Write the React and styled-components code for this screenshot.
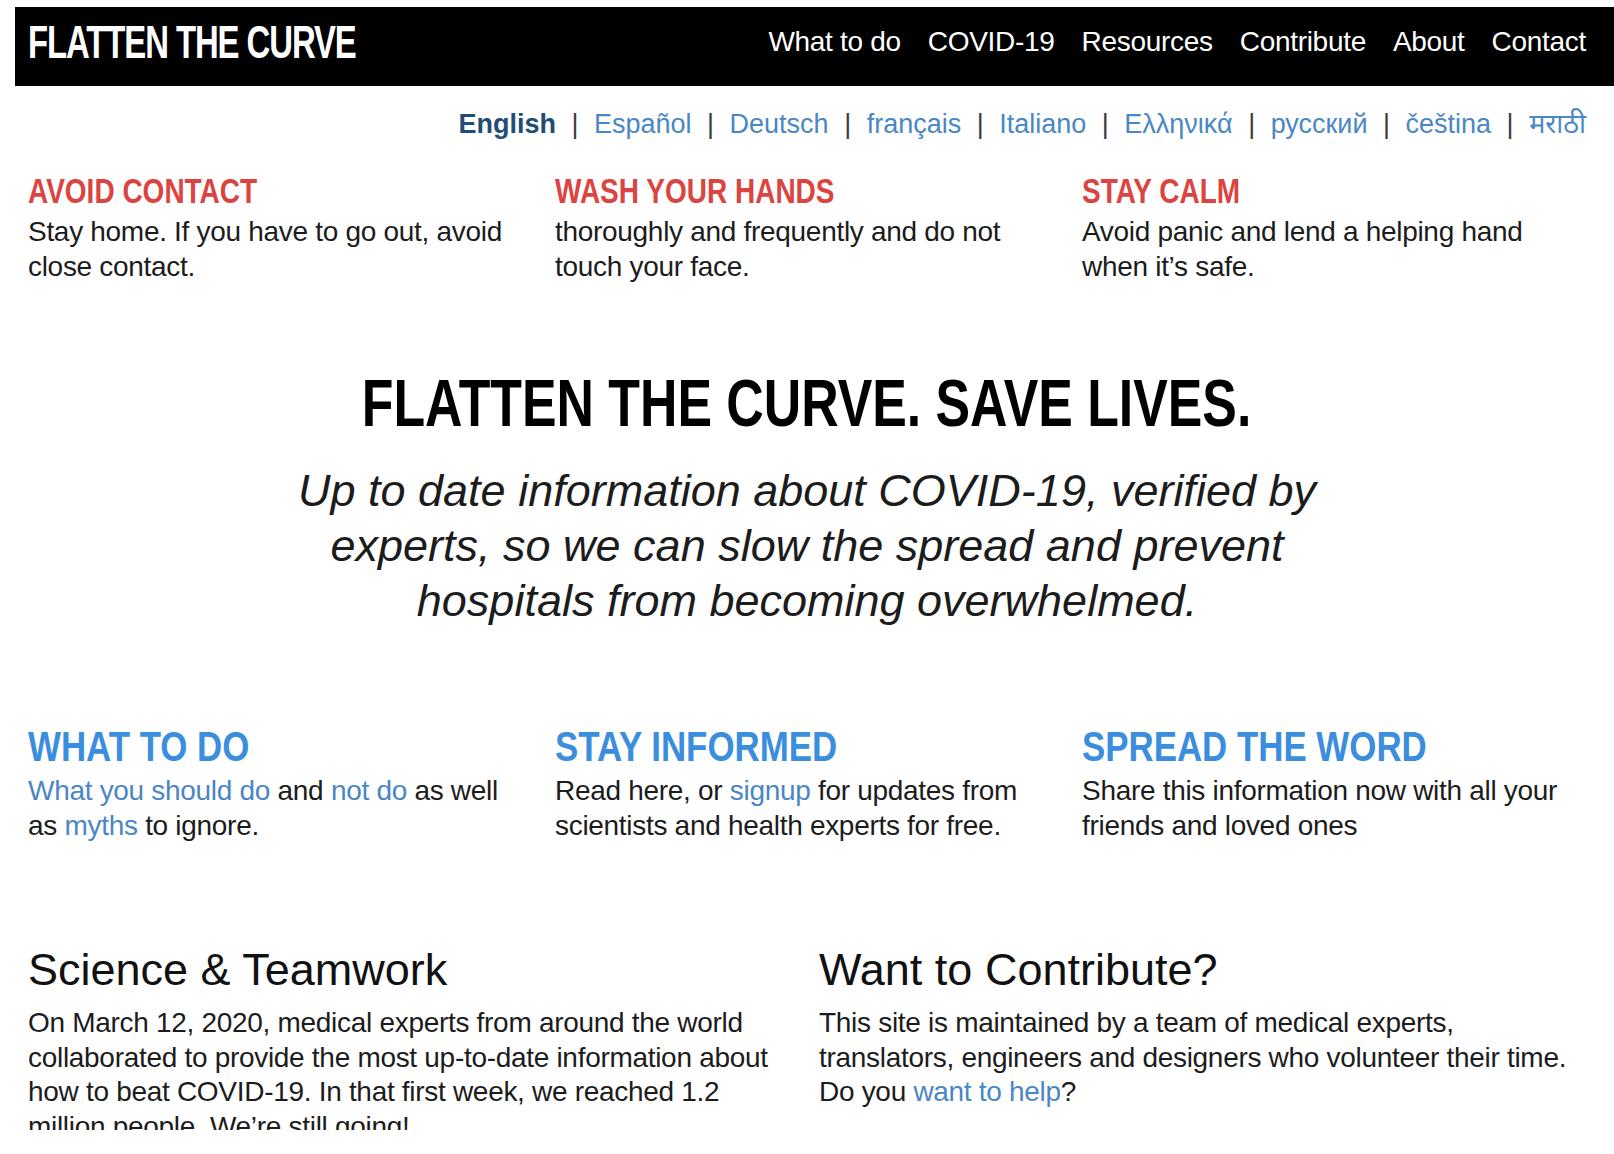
import React from "react";
import styled, { createGlobalStyle } from "styled-components";

const COLOR = {
  black: "#000000",
  text: "#1c1c1c",
  red: "#db4441",
  blue: "#3b8edd",
  link: "#4a87c4",
  linkActive: "#1f4d78",
  sep: "#3a3a3a",
};

const FONT = `"Liberation Sans", Arial, "Noto Sans", sans-serif`;

const NAV_ITEMS = ["What to do", "COVID-19", "Resources", "Contribute", "About", "Contact"];
const LANGUAGES = ["English", "Español", "Deutsch", "français", "Italiano", "Ελληνικά", "русский", "čeština", "मराठी"];

const TIPS = [
  { title: "AVOID CONTACT", text: "Stay home. If you have to go out, avoid close contact." },
  { title: "WASH YOUR HANDS", text: "thoroughly and frequently and do not touch your face." },
  { title: "STAY CALM", text: "Avoid panic and lend a helping hand when it’s safe." },
];

const GlobalStyle = createGlobalStyle`
  body {
    margin: 0;
    background: #ffffff;
    font-family: ${FONT};
    color: ${COLOR.text};
  }
  * {
    box-sizing: border-box;
  }
`;

export default function App() {
  return (
    <>
      <GlobalStyle />
      <StyledPage>
        <StyledTopBar>
          <StyledLogo>FLATTEN THE CURVE</StyledLogo>
          <StyledNav>
            {NAV_ITEMS.map((item) => (
              <StyledNavLink key={item} href="#">
                {item}
              </StyledNavLink>
            ))}
          </StyledNav>
        </StyledTopBar>

        <StyledContent>
          <StyledLangBar>
            {LANGUAGES.map((lang, i) => (
              <React.Fragment key={lang}>
                {i > 0 && <StyledSep>|</StyledSep>}
                <StyledLangLink href="#" $active={i === 0}>
                  {lang}
                </StyledLangLink>
              </React.Fragment>
            ))}
          </StyledLangBar>

          <StyledTipGrid>
            {TIPS.map((tip) => (
              <StyledTip key={tip.title}>
                <StyledHeading $color={COLOR.red} $size={35} $scale={0.8}>
                  <span>{tip.title}</span>
                </StyledHeading>
                <StyledText>{tip.text}</StyledText>
              </StyledTip>
            ))}
          </StyledTipGrid>

          <StyledHero>
            <StyledHeroTitle>
              <span>FLATTEN THE CURVE. SAVE LIVES.</span>
            </StyledHeroTitle>
            <StyledHeroSub>
              Up to date information about COVID-19, verified by experts, so we can slow the
              spread and prevent hospitals from becoming overwhelmed.
            </StyledHeroSub>
          </StyledHero>

          <StyledActionGrid>
            <StyledTip>
              <StyledHeading $color={COLOR.blue} $size={42} $scale={0.83}>
                <span>WHAT TO DO</span>
              </StyledHeading>
              <StyledText>
                <StyledLink href="#">What you should do</StyledLink> and{" "}
                <StyledLink href="#">not do</StyledLink> as well as{" "}
                <StyledLink href="#">myths</StyledLink> to ignore.
              </StyledText>
            </StyledTip>
            <StyledTip>
              <StyledHeading $color={COLOR.blue} $size={42} $scale={0.83}>
                <span>STAY INFORMED</span>
              </StyledHeading>
              <StyledText>
                Read here, or <StyledLink href="#">signup</StyledLink> for updates from scientists
                and health experts for free.
              </StyledText>
            </StyledTip>
            <StyledTip>
              <StyledHeading $color={COLOR.blue} $size={42} $scale={0.83}>
                <span>SPREAD THE WORD</span>
              </StyledHeading>
              <StyledText>Share this information now with all your friends and loved ones</StyledText>
            </StyledTip>
          </StyledActionGrid>

          <StyledAboutGrid>
            <StyledAbout>
              <StyledAboutTitle>Science &amp; Teamwork</StyledAboutTitle>
              <StyledAboutText>
                On March 12, 2020, medical experts from around the world collaborated to provide
                the most up-to-date information about how to beat COVID-19. In that first week, we
                reached 1.2 million people. We’re still going!
              </StyledAboutText>
            </StyledAbout>
            <StyledAbout>
              <StyledAboutTitle>Want to Contribute?</StyledAboutTitle>
              <StyledAboutText>
                This site is maintained by a team of medical experts, translators, engineers and
                designers who volunteer their time. Do you{" "}
                <StyledLink href="#">want to help</StyledLink>?
              </StyledAboutText>
            </StyledAbout>
          </StyledAboutGrid>
        </StyledContent>
      </StyledPage>
    </>
  );
}

const StyledPage = styled.div`
  height: 1130px;
  overflow: hidden;
  padding: 7px 0 0 15px;
`;

const StyledTopBar = styled.header`
  display: flex;
  align-items: center;
  justify-content: space-between;
  height: 79px;
  padding: 0 28px 9px 13px;
  background: ${COLOR.black};
`;

const StyledLogo = styled.div`
  display: inline-block;
  color: #ffffff;
  font-size: 46px;
  font-weight: 700;
  letter-spacing: -1.5px;
  line-height: 1;
  white-space: nowrap;
  transform: scaleX(0.715);
  transform-origin: left center;
`;

const StyledNav = styled.nav`
  display: flex;
  gap: 27px;
`;

const StyledNavLink = styled.a`
  color: #ffffff;
  font-size: 28px;
  letter-spacing: -0.3px;
  text-decoration: none;
  white-space: nowrap;
`;

const StyledContent = styled.main`
  padding: 0 28px 0 13px;
`;

const StyledLangBar = styled.div`
  display: flex;
  justify-content: flex-end;
  align-items: center;
  margin-top: 22px;
  font-size: 27px;
  line-height: 32px;
`;

const StyledLangLink = styled.a`
  color: ${({ $active }) => ($active ? COLOR.linkActive : COLOR.link)};
  font-weight: ${({ $active }) => ($active ? 700 : 400)};
  text-decoration: none;
  white-space: nowrap;
`;

const StyledSep = styled.span`
  padding: 0 15.5px;
  color: ${COLOR.sep};
`;

const StyledTipGrid = styled.section`
  display: grid;
  grid-template-columns: 527px 527px 1fr;
  margin-top: 31px;
`;

const StyledTip = styled.div`
  max-width: 497px;
`;

const StyledHeading = styled.h2`
  margin: 0 0 3px;
  color: ${({ $color }) => $color};
  font-size: ${({ $size }) => $size}px;
  line-height: ${({ $size }) => $size + 5}px;
  font-weight: 700;
  white-space: nowrap;

  span {
    display: inline-block;
    transform: scaleX(${({ $scale }) => $scale});
    transform-origin: left center;
  }
`;

const StyledText = styled.p`
  margin: 0;
  font-size: 28px;
  line-height: 35px;
  letter-spacing: -0.3px;
  color: ${COLOR.text};
`;

const StyledLink = styled.a`
  color: ${COLOR.link};
  text-decoration: none;
`;

const StyledHero = styled.section`
  margin-top: 81px;
  text-align: center;
`;

const StyledHeroTitle = styled.h1`
  margin: 0;
  font-size: 66px;
  line-height: 76px;
  font-weight: 700;
  color: #000000;
  white-space: nowrap;

  span {
    display: inline-block;
    transform: scaleX(0.785);
  }
`;

const StyledHeroSub = styled.p`
  max-width: 1060px;
  margin: 22px auto 0;
  font-size: 45px;
  line-height: 55px;
  font-style: italic;
  color: ${COLOR.text};
`;

const StyledActionGrid = styled(StyledTipGrid)`
  margin-top: 95px;
`;

const StyledAboutGrid = styled.section`
  display: grid;
  grid-template-columns: 791px 1fr;
  margin-top: 101px;
`;

const StyledAbout = styled.div`
  max-width: 765px;
`;

const StyledAboutTitle = styled.h3`
  margin: 0 0 10px;
  font-size: 45px;
  line-height: 52px;
  font-weight: 400;
  color: #111111;
`;

const StyledAboutText = styled.p`
  margin: 0;
  font-size: 28px;
  line-height: 34.5px;
  letter-spacing: -0.3px;
  color: ${COLOR.text};
`;
